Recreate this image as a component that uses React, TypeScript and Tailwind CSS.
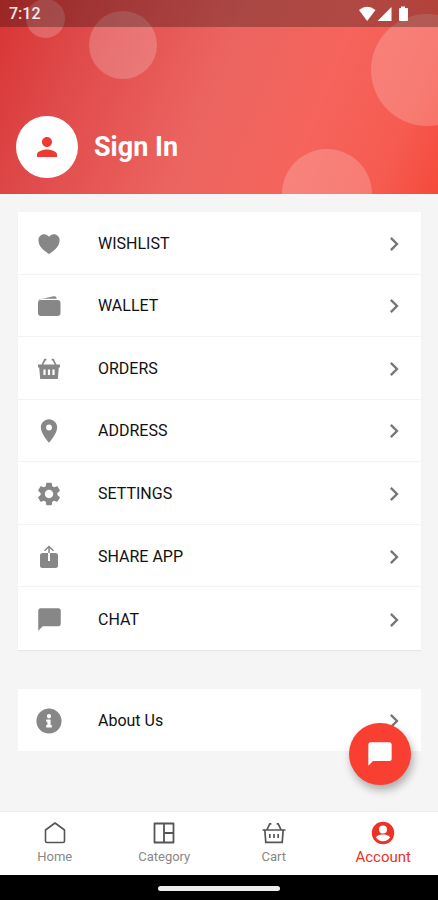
import type { ReactNode } from "react";
import { FaInfoCircle } from "react-icons/fa";
import { IoHeart } from "react-icons/io5";
import { MdChatBubble, MdChevronRight, MdLocationOn, MdPerson, MdSettings } from "react-icons/md";

function WalletIcon() {
  return (
    <svg width="24" height="24" viewBox="0 0 24 24" fill="currentColor" aria-hidden="true">
      <path d="M3 5.2 16.6 2.2Q19.4 1.8 19.6 4V4.8H6.5Q3.2 4.8 1.2 7Q1.2 5.6 3 5.2Z" />
      <rect x="1" y="6" width="22.5" height="16" rx="3" />
    </svg>
  );
}

function BasketIcon() {
  return (
    <svg width="24" height="24" viewBox="0 0 24 24" aria-hidden="true">
      <path fill="none" stroke="currentColor" strokeWidth="1.7" d="M4.8 9 7.8 2.6h1.6M19.2 9 16.2 2.6h-1.6" />
      <path
        fill="currentColor"
        fillRule="evenodd"
        d="M1 7.6h22v3h-1.2L20.8 22H3.2L2.2 10.6H1ZM6.4 12.6V18h2.2v-5.4ZM10.9 12.6V18h2.2v-5.4ZM15.4 12.6V18h2.2v-5.4Z"
      />
    </svg>
  );
}

function ShareIcon() {
  return (
    <svg width="24" height="24" viewBox="0 0 24 24" aria-hidden="true">
      <path
        fill="currentColor"
        d="M5.500 8H11v8h2V8h5.500Q21 8 21 10.500v10Q21 23 18.500 23h-13Q3 23 3 20.500v-10Q3 8 5.500 8Z"
      />
      <path fill="none" stroke="currentColor" strokeWidth="1.5" d="M12 8V1.500M7.500 5.800 12 1.500l4.500 4.300" />
    </svg>
  );
}

function HomeOutline() {
  return (
    <svg width="24" height="24" viewBox="0 0 24 24" fill="none" stroke="currentColor" strokeWidth="1.6" strokeLinejoin="round" aria-hidden="true">
      <path d="M2.5 9 12 2l9.500 7v11q0 1.500-1.500 1.500H4q-1.500 0-1.500-1.500Z" />
    </svg>
  );
}

function CategoryOutline() {
  return (
    <svg width="24" height="24" viewBox="0 0 24 24" fill="none" stroke="currentColor" strokeWidth="1.8" strokeLinejoin="round" aria-hidden="true">
      <path d="M2.500 2.500h19v19h-19ZM12 2.500v19M12 12h9.500" />
    </svg>
  );
}

function BasketOutline() {
  return (
    <svg width="24" height="24" viewBox="0 0 24 24" fill="none" stroke="currentColor" strokeWidth="1.7" aria-hidden="true">
      <path d="M4.800 9 7.800 2.800h1.600M19.200 9 16.200 2.800h-1.600M.500 9h23M2.800 9l1 12.300h16.400L21.200 9" />
      <path d="M7.800 13v4M12 13v4M16.200 13v4" />
    </svg>
  );
}

function AccountIcon() {
  return (
    <svg width="24" height="24" viewBox="0 0 24 24" aria-hidden="true">
      <circle cx="12" cy="12" r="11.2" fill="currentColor" />
      <circle cx="12" cy="8.400" r="4" fill="#fff" />
      <path fill="#fff" d="M4.800 16.200C6.800 13.800 9.500 13.400 12 13.400s5.200.4 7.200 2.800C17.500 19 15 20.300 12 20.300S6.500 19 4.800 16.200Z" />
    </svg>
  );
}

const menu: { label: string; icon: ReactNode }[] = [
  { label: "WISHLIST", icon: <IoHeart size={26} /> },
  { label: "WALLET", icon: <WalletIcon /> },
  { label: "ORDERS", icon: <BasketIcon /> },
  { label: "ADDRESS", icon: <MdLocationOn size={28} /> },
  { label: "SETTINGS", icon: <MdSettings size={28} /> },
  { label: "SHARE APP", icon: <ShareIcon /> },
  { label: "CHAT", icon: <MdChatBubble size={27} /> },
];

const tabs: { label: string; icon: ReactNode; active?: boolean }[] = [
  { label: "Home", icon: <HomeOutline /> },
  { label: "Category", icon: <CategoryOutline /> },
  { label: "Cart", icon: <BasketOutline /> },
  { label: "Account", icon: <AccountIcon />, active: true },
];

function MenuRow({ label, icon }: { label: string; icon: ReactNode }) {
  return (
    <button type="button" className="flex min-h-[62px] w-full items-center pt-0.5 pr-[13px] pl-[15px] text-left">
      <span className="flex w-8 justify-center text-[#878787]">{icon}</span>
      <span className="ml-[33px] flex-1 text-base text-[#111]">{label}</span>
      <MdChevronRight size={28} className="text-[#777]" />
    </button>
  );
}

function StatusBar() {
  return (
    <div className="relative flex h-[27px] items-center justify-between bg-black/28 pr-7 pl-[9px] text-white">
      <span className="text-base font-medium text-white/90">7:12</span>
      <svg width="52" height="16" viewBox="0 0 52 16" fill="currentColor" aria-hidden="true">
        <path d="M1 4Q9 -2.500 17.500 4L9.200 15Z" />
        <path d="M33.500 1v14H19.500Z" />
        <path d="M43 .5h4V2h2q1 0 1 1v11q0 1-1 1h-7q-1 0-1-1V3q0-1 1-1h1Z" />
      </svg>
    </div>
  );
}

export default function App() {
  return (
    <div className="relative flex min-h-screen flex-col bg-[#f5f5f5] font-['Roboto',sans-serif]">
      <header className="relative flex h-[194px] flex-col overflow-hidden bg-[linear-gradient(112deg,#d83434_0%,#e04b4b_20%,#ec6460_48%,#f5645d_70%,#f65b50_88%,#f54a3b_100%)]">
        <span className="absolute -top-px left-[26px] size-[39px] rounded-full bg-white/20" />
        <span className="absolute top-[11px] left-[89px] size-[68px] rounded-full bg-white/20" />
        <span className="absolute top-[14px] -right-[45px] size-28 rounded-full bg-white/20" />
        <span className="absolute top-[149px] right-[66px] size-[90px] rounded-full bg-white/20" />
        <StatusBar />
        <button type="button" className="relative mt-auto mb-4 ml-4 flex items-center gap-4 self-start text-white">
          <span className="flex size-[62px] items-center justify-center rounded-full bg-white text-[#ee3a30]">
            <MdPerson size={30} />
          </span>
          <span className="text-[27px] font-bold">Sign In</span>
        </button>
      </header>

      <main className="flex-1 pt-[18px] pr-[17px] pb-[60px] pl-[18px]">
        <div className="grid min-h-[438px] auto-rows-fr divide-y divide-[#f3f3f3] bg-white shadow-[0_1px_1px_rgba(0,0,0,0.06)]">
          {menu.map((item) => (
            <MenuRow key={item.label} {...item} />
          ))}
        </div>
        <div className="mt-[39px] bg-white">
          <MenuRow label="About Us" icon={<FaInfoCircle size={26} />} />
        </div>
      </main>

      <button
        type="button"
        aria-label="Open chat"
        className="absolute right-[27px] bottom-[116px] flex size-[62px] items-center justify-center rounded-full bg-[#f93e32] text-white shadow-[2px_5px_8px_rgba(0,0,0,0.3)]"
      >
        <MdChatBubble size={28} />
      </button>

      <nav className="grid h-16 grid-cols-4 border-t border-[#ececec] bg-white">
        {tabs.map((tab) => (
          <a
            key={tab.label}
            href="#"
            aria-current={tab.active ? "page" : undefined}
            className={
              tab.active
                ? "flex flex-col items-center pt-[7px] text-[15px] text-[#ee3124]"
                : "flex flex-col items-center pt-[7px] text-[13px] text-[#888]"
            }
          >
            <span className={tab.active ? "flex h-7 items-center" : "flex h-7 items-center text-[#555]"}>
              {tab.icon}
            </span>
            <span className="leading-5">{tab.label}</span>
          </a>
        ))}
      </nav>
      <div className="flex h-[26px] items-center justify-center bg-black">
        <span className="h-[5px] w-[122px] rounded-full bg-[#eee]" />
      </div>
    </div>
  );
}
